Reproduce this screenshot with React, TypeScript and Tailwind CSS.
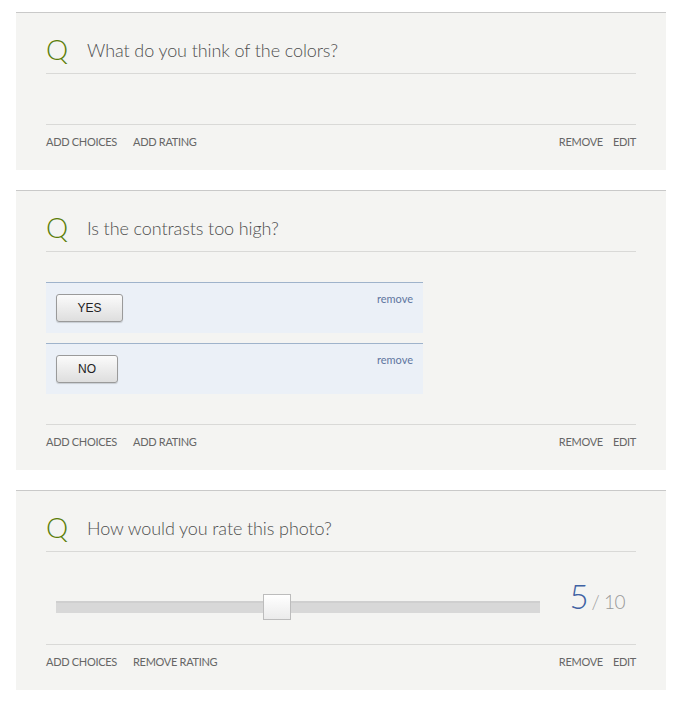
import React from "react";

type Choice = { label: string; width: string };

const font = { fontFamily: "Lato, 'Open Sans', sans-serif" };

function Footer({ rating }: { rating: string }) {
  return (
    <div className="flex items-center justify-between border-t border-[#d9d9d7] pt-[10px] pb-[21px] text-[11px] leading-[14px] text-[#666] uppercase tracking-[-0.3px]">
      <div className="flex gap-[16px]">
        <span>Add choices</span>
        <span>{rating}</span>
      </div>
      <div className="flex gap-[10px]">
        <span>Remove</span>
        <span>Edit</span>
      </div>
    </div>
  );
}

function Card({
  question,
  rating,
  children,
}: {
  question: string;
  rating: string;
  children: React.ReactNode;
}) {
  return (
    <section className="ml-[16px] w-[650px] bg-[#f4f4f2] border-t border-[#c9c9c9] px-[30px] pt-[22px]">
      <div className="border-b border-[#d9d9d7] pb-[8px]">
        <div className="flex items-center h-[30px]">
          <span className="text-[28px] leading-none font-light text-[#5c7e08] w-[41px] -mt-[2px]">
            Q
          </span>
          <span className="text-[18px] font-light text-[#4f4f4f] tracking-[-0.1px]">{question}</span>
        </div>
      </div>
      {children}
      <Footer rating={rating} />
    </section>
  );
}

function ChoiceRow({ c }: { c: Choice }) {
  return (
    <div className="flex justify-between items-start border-t border-[#9fb3cb] bg-[#ebf0f7] h-[51px] px-[10px] pt-[11px]">
      <button
        className={`${c.width} h-[28px] rounded-[3px] border border-[#9a9a9a] bg-gradient-to-b from-[#fbfbfb] to-[#dedede] shadow-[0_1px_1px_rgba(0,0,0,0.15)] text-[12px] text-[#222]`}
        style={{ fontFamily: "'Liberation Sans', Arial, sans-serif" }}
      >
        {c.label}
      </button>
      <span className="text-[11px] text-[#5f76a0] -mt-[3px]">remove</span>
    </div>
  );
}

export default function App() {
  const choices: Choice[] = [
    { label: "YES", width: "w-[67px]" },
    { label: "NO", width: "w-[62px]" },
  ];
  const value = 5;
  const max = 10;

  return (
    <div className="w-[681px] h-[707px] bg-white pt-[12px]" style={font}>
      <div className="flex flex-col gap-[20px]">
        <Card question="What do you think of the colors?" rating="Add rating">
          <div className="h-[50px]" />
        </Card>

        <Card question="Is the contrasts too high?" rating="Add rating">
          <div className="pt-[30px] pb-[30px] w-[377px] flex flex-col gap-[10px]">
            {choices.map((c) => (
              <ChoiceRow key={c.label} c={c} />
            ))}
          </div>
        </Card>

        <Card question="How would you rate this photo?" rating="Remove rating">
          <div className="h-[92px] flex items-center pl-[10px] pr-[10px] pt-[18px]">
            <div className="relative w-[484px] h-[12px] bg-[#d8d8d8] border-t-2 border-[#cfcfcf]">
              <div
                className="absolute top-[-9px] w-[28px] h-[26px] border border-[#bcbcbc] bg-gradient-to-b from-white to-[#ebebeb]"
                style={{ left: `${(value / max) * 100 - 7.2}%` }}
              />
            </div>
            <div className="ml-auto flex items-baseline -mt-[17px] pr-[1px]">
              <span className="text-[33px] leading-none font-light text-[#3f62a3] tracking-[-2px]">
                {value}
              </span>
              <span className="text-[19px] font-light text-[#999] ml-[5px] tracking-[-0.5px]">
                / {max}
              </span>
            </div>
          </div>
        </Card>
      </div>
    </div>
  );
}
